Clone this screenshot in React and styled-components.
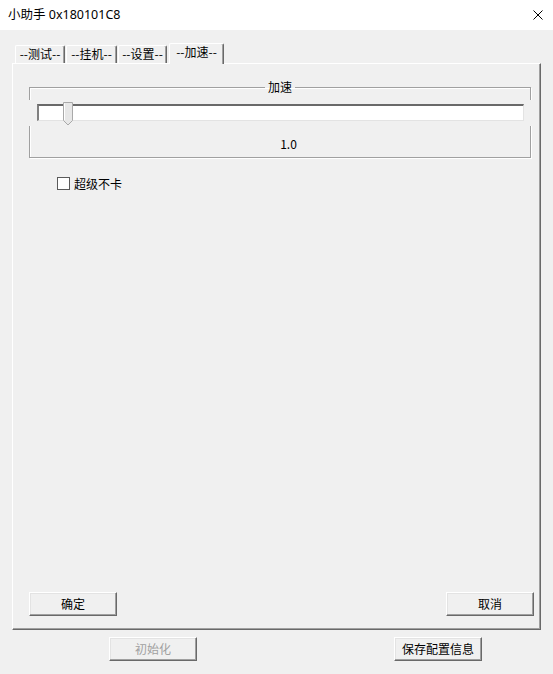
import React from 'react'
import styled, { createGlobalStyle } from 'styled-components'

const GlobalStyle = createGlobalStyle`
    html, body {
        margin: 0;
        padding: 0;
        background: #f0f0f0;
    }
    body {
        font-family: "Noto Sans CJK SC", "Noto Sans", sans-serif;
        font-size: 12px;
        color: #000;
    }
`

const Window = styled.div`
    width: 553px;
    height: 674px;
    background: #f0f0f0;
    overflow: hidden;
`
const TitleBar = styled.div`
    height: 30px;
    background: #fff;
    display: flex;
    align-items: center;
    justify-content: space-between;
    padding: 0 10px 0 8px;
    box-sizing: border-box;
`
const Title = styled.div`
    font-family: "Noto Sans", "Noto Sans CJK SC", sans-serif;
    font-size: 12.5px;
    line-height: 14px;
`
const CloseButton = styled.div`
    width: 10px;
    height: 10px;
    display: flex;
`
const Body = styled.div`
    padding: 13px 12px 0;
`
const TabStrip = styled.div`
    display: flex;
    align-items: flex-end;
    gap: 1px;
    height: 20px;
    padding-left: 3px;
    position: relative;
    z-index: 1;
`
const Tab = styled.div`
    box-sizing: border-box;
    width: ${p => p.$w}px;
    height: ${p => (p.$active ? 21 : 18)}px;
    margin-left: ${p => (p.$active ? 1 : 0)}px;
    margin-bottom: ${p => (p.$active ? -1 : 0)}px;
    background: #f0f0f0;
    border-top: 1px solid #fff;
    border-left: 1px solid #fff;
    border-right: 1px solid #696969;
    border-top-left-radius: 2px;
    border-top-right-radius: 2px;
    box-shadow: inset -1px 0 0 #a0a0a0;
    display: flex;
    justify-content: center;
    padding-top: 1px;
    line-height: 14px;
    white-space: nowrap;
`
const Panel = styled.div`
    box-sizing: border-box;
    height: 567px;
    border-top: 1px solid #fff;
    border-left: 1px solid #fff;
    border-right: 1px solid #696969;
    border-bottom: 1px solid #696969;
    box-shadow: inset -1px -1px 0 #a0a0a0;
    display: flex;
    flex-direction: column;
    padding: 16px 6px 13px 16px;
`
const GroupBox = styled.fieldset`
    box-sizing: border-box;
    width: 502px;
    min-width: 0;
    margin: 0;
    padding: 6px 0 0;
    border: 1px solid #a0a0a0;
    box-shadow: inset 1px 1px 0 #fff, 1px 1px 0 #fff;
`
const Legend = styled.legend`
    margin: 0 auto;
    padding: 0 3px;
    line-height: 14px;
`
const SliderRow = styled.div`
    position: relative;
    height: 26px;
    margin: 0 -2px;
    padding: 4px 8px 0 9px;
    box-sizing: border-box;
    background: #f0f0f0;
`
const Track = styled.div`
    height: 17px;
    box-sizing: border-box;
    background: #fff;
    border-top: 2px solid #696969;
    border-left: 2px solid #808080;
    border-right: 1px solid #e3e3e3;
    border-bottom: 1px solid #e3e3e3;
`
const Thumb = styled.svg`
    position: absolute;
    left: 35px;
    top: 2px;
`
const ValueLabel = styled.div`
    height: 31px;
    box-sizing: border-box;
    padding: 11px 0 0 17px;
    line-height: 14px;
    text-align: center;
`
const CheckRow = styled.label`
    display: flex;
    align-items: center;
    gap: 4px;
    margin: 19px 0 0 28px;
    height: 13px;
    line-height: 14px;
`
const CheckBox = styled.span`
    width: 13px;
    height: 13px;
    box-sizing: border-box;
    background: #fff;
    border: 1px solid #5a5a5a;
`
const Spacer = styled.div`
    flex: 1;
`
const ButtonRow = styled.div`
    display: flex;
    justify-content: space-between;
`
const Button = styled.div`
    width: 88px;
    height: 24px;
    box-sizing: border-box;
    background: #f0f0f0;
    border-top: 1px solid #fff;
    border-left: 1px solid #fff;
    border-right: 1px solid #696969;
    border-bottom: 1px solid #696969;
    box-shadow: inset -1px -1px 0 #a0a0a0, inset 1px 1px 0 #e3e3e3;
    display: flex;
    align-items: center;
    justify-content: center;
    line-height: 14px;
    color: ${p => (p.$disabled ? '#a0a0a0' : '#000')};
`
const FooterRow = styled.div`
    display: flex;
    gap: 197px;
    margin-top: 7px;
    padding-left: 97px;
`

const tabs = [
    { label: '--测试--', w: 50 },
    { label: '--挂机--', w: 51 },
    { label: '--设置--', w: 49 },
    { label: '--加速--', w: 55, active: true },
]

export default function App() {
    return (
        <Window>
            <GlobalStyle />
            <TitleBar>
                <Title>小助手 0x180101C8</Title>
                <CloseButton>
                    <svg width="10" height="10" viewBox="0 0 10 10">
                        <path d="M0.5 0.5 L9.5 9.5 M9.5 0.5 L0.5 9.5" stroke="#000" strokeWidth="1" />
                    </svg>
                </CloseButton>
            </TitleBar>
            <Body>
                <TabStrip>
                    {tabs.map(t => (
                        <Tab key={t.label} $w={t.w} $active={t.active}>{t.label}</Tab>
                    ))}
                </TabStrip>
                <Panel>
                    <GroupBox>
                        <Legend>加速</Legend>
                        <SliderRow>
                            <Track />
                            <Thumb width="10" height="24" viewBox="0 0 10 24">
                                <path d="M0.5 0.5 H9.5 V18.5 L5 23 L0.5 18.5 Z" fill="#e7e7e7" stroke="#a9a9a9" />
                                <path d="M1.5 1.5 V18" stroke="#fff" />
                            </Thumb>
                        </SliderRow>
                        <ValueLabel>1.0</ValueLabel>
                    </GroupBox>
                    <CheckRow>
                        <CheckBox />
                        超级不卡
                    </CheckRow>
                    <Spacer />
                    <ButtonRow>
                        <Button>确定</Button>
                        <Button>取消</Button>
                    </ButtonRow>
                </Panel>
                <FooterRow>
                    <Button $disabled>初始化</Button>
                    <Button>保存配置信息</Button>
                </FooterRow>
            </Body>
        </Window>
    )
}
